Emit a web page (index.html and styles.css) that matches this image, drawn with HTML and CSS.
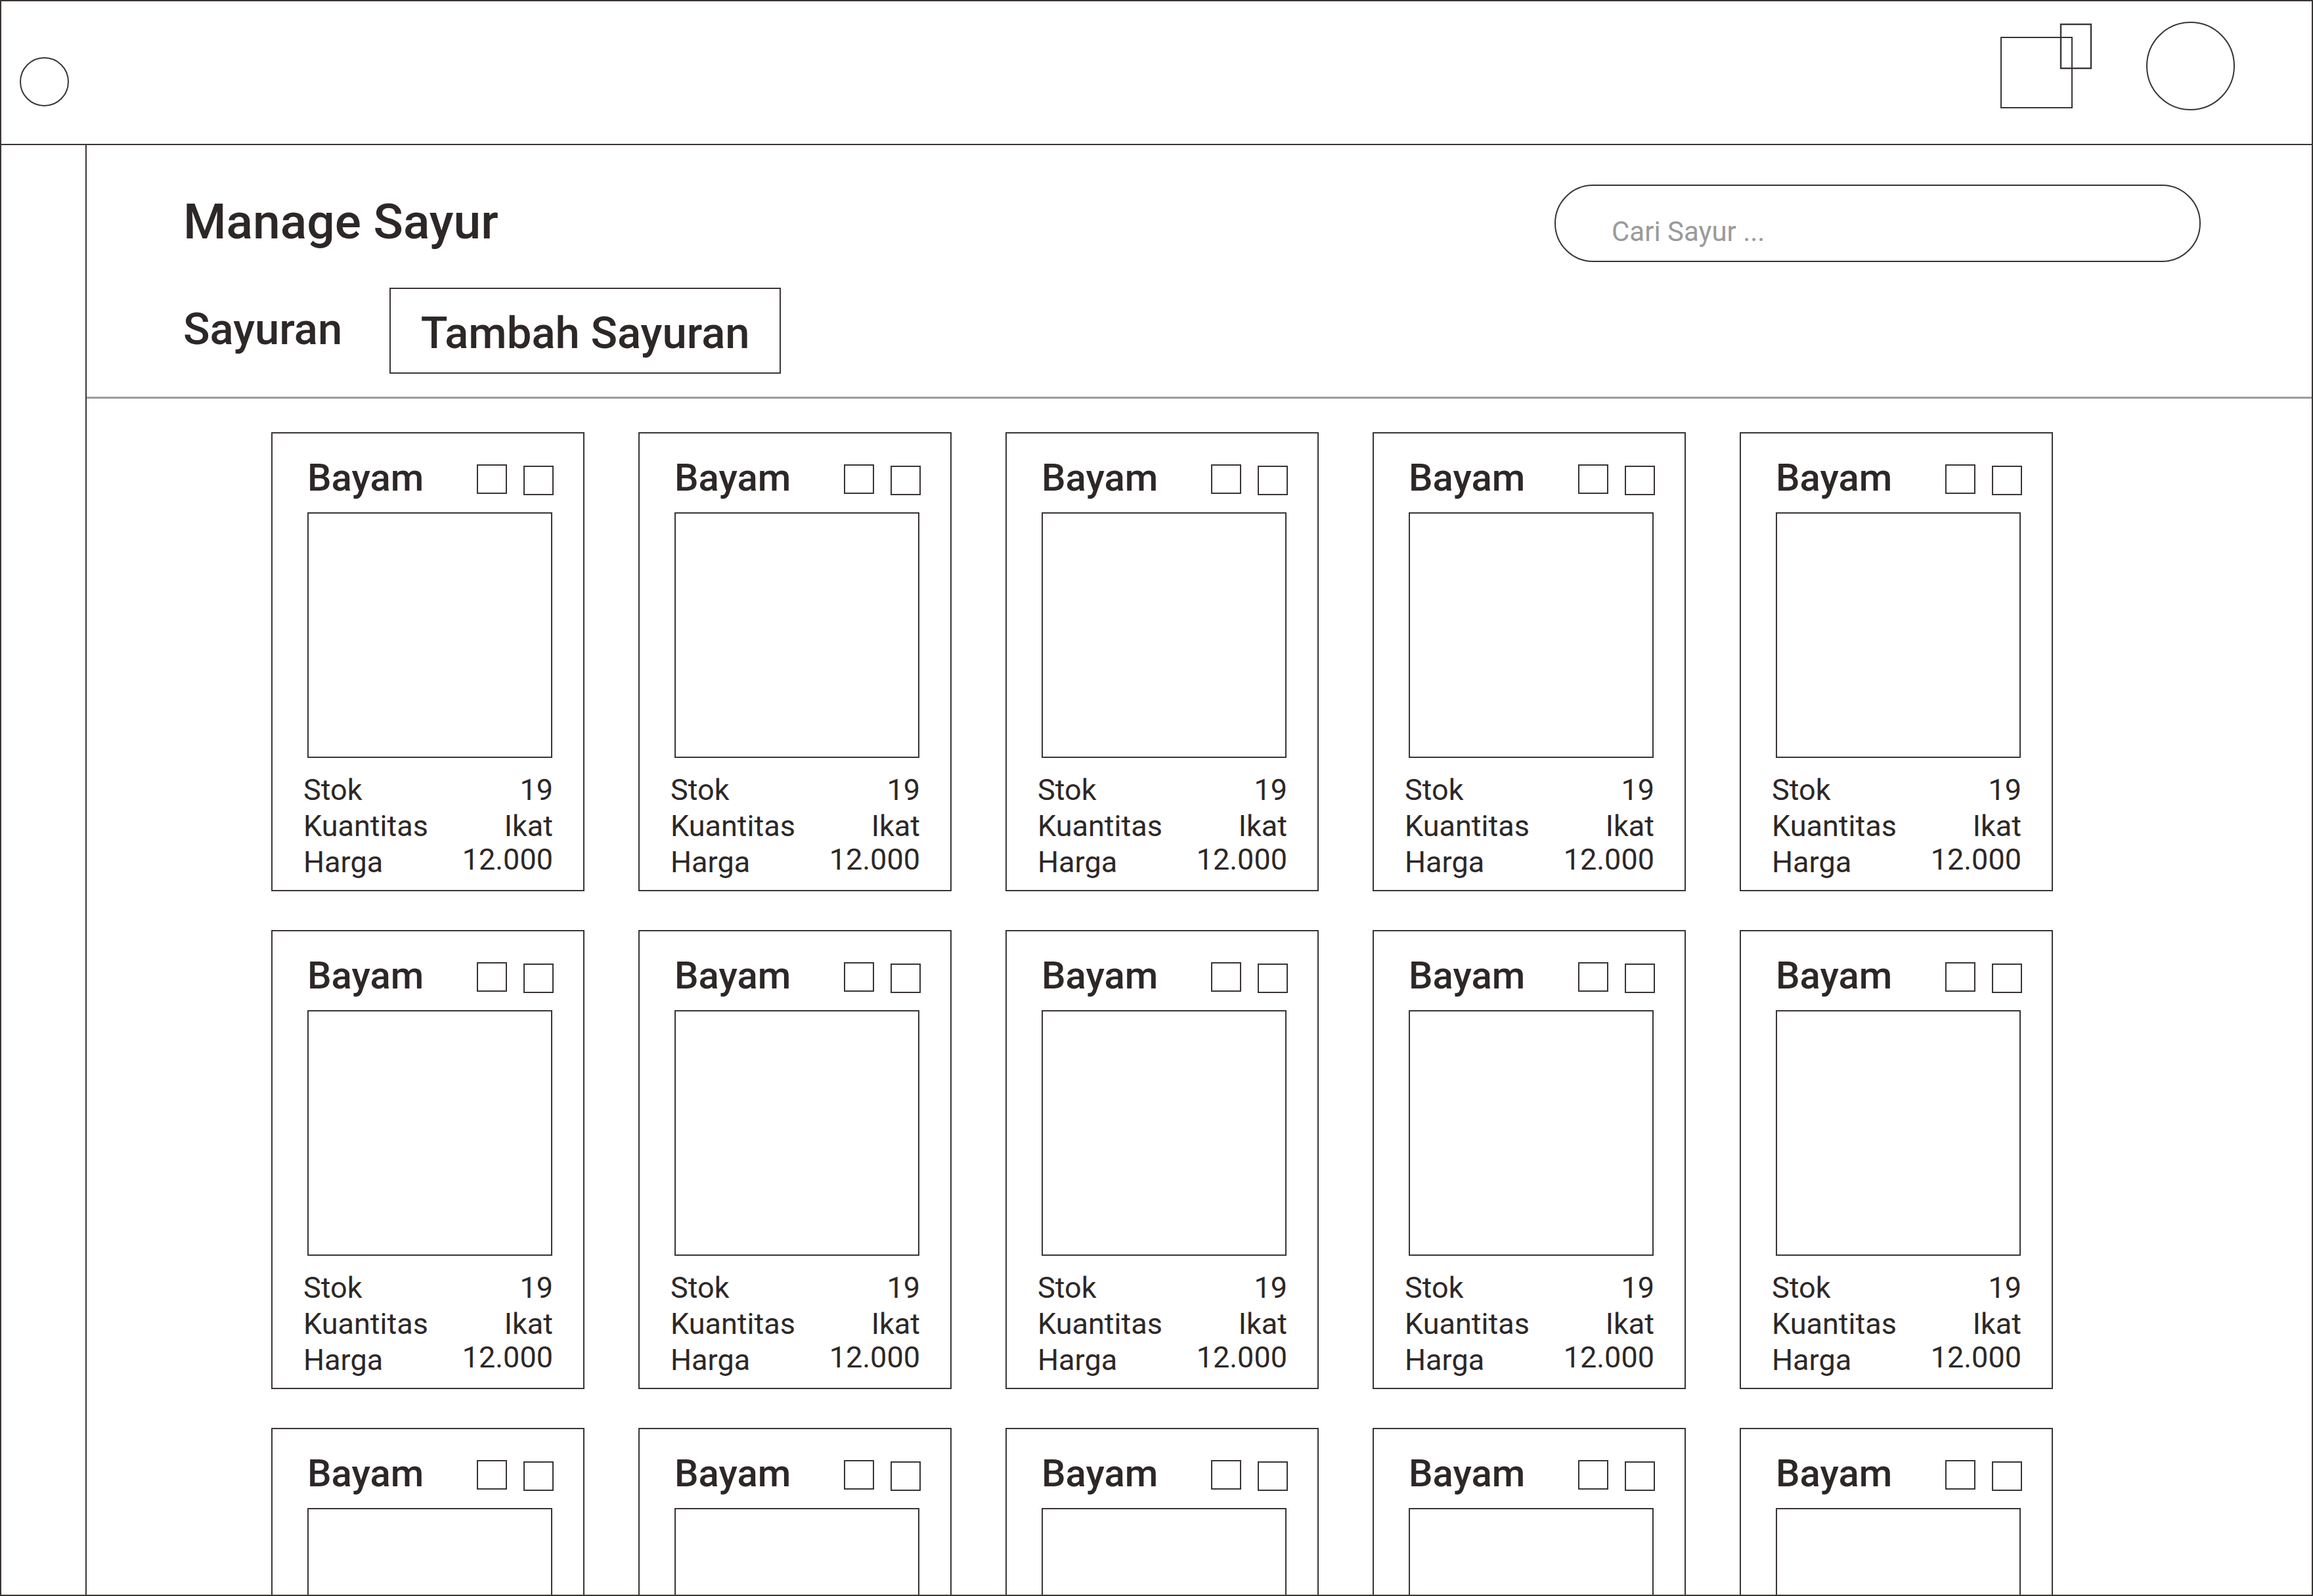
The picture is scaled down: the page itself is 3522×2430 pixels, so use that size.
FILE: index.html
```html
<!DOCTYPE html>
<html lang="id">
<head>
<meta charset="utf-8">
<title>Manage Sayur</title>
<link rel="stylesheet" href="styles.css">
</head>
<body>
<div class="frame">
  <header class="topbar">
    <div class="dot"></div>
    <div class="top-actions">
      <svg class="windows-icon" width="141" height="131" viewBox="0 0 141 131">
        <rect x="2" y="22" width="108" height="107" fill="none" stroke="#3a3534" stroke-width="2"/>
        <rect x="93" y="2" width="46" height="67" fill="none" stroke="#3a3534" stroke-width="2.4"/>
      </svg>
      <div class="avatar"></div>
    </div>
  </header>
  <div class="body">
    <aside class="sidebar"></aside>
    <main class="main">
      <section class="toolbar">
        <div class="toolbar-row">
          <h1 class="page-title">Manage Sayur</h1>
          <div class="search">Cari Sayur ...</div>
        </div>
        <div class="toolbar-row2">
          <span class="section-label">Sayuran</span>
          <button class="add-btn">Tambah Sayuran</button>
        </div>
      </section>
      <section class="grid">
        <article class="card"><div class="card-head"><span class="card-title">Bayam</span><div class="card-actions"><span class="sq"></span><span class="sq sq2"></span></div></div><div class="thumb"></div><div class="stats"><div class="stat"><span>Stok</span><span>19</span></div><div class="stat"><span>Kuantitas</span><span>Ikat</span></div><div class="stat"><span>Harga</span><span class="price">12.000</span></div></div></article>
        <article class="card"><div class="card-head"><span class="card-title">Bayam</span><div class="card-actions"><span class="sq"></span><span class="sq sq2"></span></div></div><div class="thumb"></div><div class="stats"><div class="stat"><span>Stok</span><span>19</span></div><div class="stat"><span>Kuantitas</span><span>Ikat</span></div><div class="stat"><span>Harga</span><span class="price">12.000</span></div></div></article>
        <article class="card"><div class="card-head"><span class="card-title">Bayam</span><div class="card-actions"><span class="sq"></span><span class="sq sq2"></span></div></div><div class="thumb"></div><div class="stats"><div class="stat"><span>Stok</span><span>19</span></div><div class="stat"><span>Kuantitas</span><span>Ikat</span></div><div class="stat"><span>Harga</span><span class="price">12.000</span></div></div></article>
        <article class="card"><div class="card-head"><span class="card-title">Bayam</span><div class="card-actions"><span class="sq"></span><span class="sq sq2"></span></div></div><div class="thumb"></div><div class="stats"><div class="stat"><span>Stok</span><span>19</span></div><div class="stat"><span>Kuantitas</span><span>Ikat</span></div><div class="stat"><span>Harga</span><span class="price">12.000</span></div></div></article>
        <article class="card"><div class="card-head"><span class="card-title">Bayam</span><div class="card-actions"><span class="sq"></span><span class="sq sq2"></span></div></div><div class="thumb"></div><div class="stats"><div class="stat"><span>Stok</span><span>19</span></div><div class="stat"><span>Kuantitas</span><span>Ikat</span></div><div class="stat"><span>Harga</span><span class="price">12.000</span></div></div></article>

        <article class="card"><div class="card-head"><span class="card-title">Bayam</span><div class="card-actions"><span class="sq"></span><span class="sq sq2"></span></div></div><div class="thumb"></div><div class="stats"><div class="stat"><span>Stok</span><span>19</span></div><div class="stat"><span>Kuantitas</span><span>Ikat</span></div><div class="stat"><span>Harga</span><span class="price">12.000</span></div></div></article>
        <article class="card"><div class="card-head"><span class="card-title">Bayam</span><div class="card-actions"><span class="sq"></span><span class="sq sq2"></span></div></div><div class="thumb"></div><div class="stats"><div class="stat"><span>Stok</span><span>19</span></div><div class="stat"><span>Kuantitas</span><span>Ikat</span></div><div class="stat"><span>Harga</span><span class="price">12.000</span></div></div></article>
        <article class="card"><div class="card-head"><span class="card-title">Bayam</span><div class="card-actions"><span class="sq"></span><span class="sq sq2"></span></div></div><div class="thumb"></div><div class="stats"><div class="stat"><span>Stok</span><span>19</span></div><div class="stat"><span>Kuantitas</span><span>Ikat</span></div><div class="stat"><span>Harga</span><span class="price">12.000</span></div></div></article>
        <article class="card"><div class="card-head"><span class="card-title">Bayam</span><div class="card-actions"><span class="sq"></span><span class="sq sq2"></span></div></div><div class="thumb"></div><div class="stats"><div class="stat"><span>Stok</span><span>19</span></div><div class="stat"><span>Kuantitas</span><span>Ikat</span></div><div class="stat"><span>Harga</span><span class="price">12.000</span></div></div></article>
        <article class="card"><div class="card-head"><span class="card-title">Bayam</span><div class="card-actions"><span class="sq"></span><span class="sq sq2"></span></div></div><div class="thumb"></div><div class="stats"><div class="stat"><span>Stok</span><span>19</span></div><div class="stat"><span>Kuantitas</span><span>Ikat</span></div><div class="stat"><span>Harga</span><span class="price">12.000</span></div></div></article>

        <article class="card"><div class="card-head"><span class="card-title">Bayam</span><div class="card-actions"><span class="sq"></span><span class="sq sq2"></span></div></div><div class="thumb"></div><div class="stats"><div class="stat"><span>Stok</span><span>19</span></div><div class="stat"><span>Kuantitas</span><span>Ikat</span></div><div class="stat"><span>Harga</span><span class="price">12.000</span></div></div></article>
        <article class="card"><div class="card-head"><span class="card-title">Bayam</span><div class="card-actions"><span class="sq"></span><span class="sq sq2"></span></div></div><div class="thumb"></div><div class="stats"><div class="stat"><span>Stok</span><span>19</span></div><div class="stat"><span>Kuantitas</span><span>Ikat</span></div><div class="stat"><span>Harga</span><span class="price">12.000</span></div></div></article>
        <article class="card"><div class="card-head"><span class="card-title">Bayam</span><div class="card-actions"><span class="sq"></span><span class="sq sq2"></span></div></div><div class="thumb"></div><div class="stats"><div class="stat"><span>Stok</span><span>19</span></div><div class="stat"><span>Kuantitas</span><span>Ikat</span></div><div class="stat"><span>Harga</span><span class="price">12.000</span></div></div></article>
        <article class="card"><div class="card-head"><span class="card-title">Bayam</span><div class="card-actions"><span class="sq"></span><span class="sq sq2"></span></div></div><div class="thumb"></div><div class="stats"><div class="stat"><span>Stok</span><span>19</span></div><div class="stat"><span>Kuantitas</span><span>Ikat</span></div><div class="stat"><span>Harga</span><span class="price">12.000</span></div></div></article>
        <article class="card"><div class="card-head"><span class="card-title">Bayam</span><div class="card-actions"><span class="sq"></span><span class="sq sq2"></span></div></div><div class="thumb"></div><div class="stats"><div class="stat"><span>Stok</span><span>19</span></div><div class="stat"><span>Kuantitas</span><span>Ikat</span></div><div class="stat"><span>Harga</span><span class="price">12.000</span></div></div></article>
      </section>
    </main>
  </div>
</div>
</body>
</html>
```

FILE: styles.css
```css
* { box-sizing: border-box; }

html, body {
  margin: 0;
  padding: 0;
  background: #ffffff;
}

body {
  font-family: Roboto, "Liberation Sans", Arial, sans-serif;
  color: #2d2827;
}

.frame {
  width: 3522px;
  height: 2430px;
  border: 2px solid #3a3534;
  display: flex;
  flex-direction: column;
  overflow: hidden;
  background: #ffffff;
}

/* top bar */
.topbar {
  height: 219px;
  flex: 0 0 219px;
  border-bottom: 2px solid #3a3534;
  display: flex;
  justify-content: space-between;
  align-items: flex-start;
  padding: 0 117px 0 28px;
}

.dot {
  width: 75px;
  height: 75px;
  margin-top: 85px;
  border: 2px solid #3a3534;
  border-radius: 50%;
}

.top-actions {
  display: flex;
  align-items: flex-start;
  margin-top: 31px;
}

.windows-icon {
  display: block;
  margin-top: 2px;
}

.avatar {
  width: 135px;
  height: 135px;
  margin-left: 82px;
  border: 2px solid #3a3534;
  border-radius: 50%;
}

/* body */
.body {
  flex: 1;
  display: flex;
  min-height: 0;
}

.sidebar {
  width: 130px;
  flex: 0 0 130px;
  border-right: 2px solid #3a3534;
}

.main {
  flex: 1;
  min-width: 0;
  overflow: hidden;
}

/* toolbar */
.toolbar {
  padding: 60px 169px 35px 147px;
  border-bottom: 3px solid #9c9c9c;
}

.toolbar-row {
  display: flex;
  justify-content: space-between;
  align-items: flex-start;
}

.page-title {
  margin: 19px 0 0 0;
  font-size: 75px;
  font-weight: 500;
  line-height: 1;
  color: #2d2827;
}

.search {
  width: 984px;
  height: 118px;
  border: 2px solid #3a3534;
  border-radius: 59px;
  display: flex;
  align-items: center;
  padding: 26px 0 0 85px;
  font-size: 42px;
  line-height: 1;
  color: #9a9a9a;
}

.toolbar-row2 {
  display: flex;
  align-items: center;
  margin-top: 39px;
}

.section-label {
  font-size: 67px;
  font-weight: 500;
  line-height: 1;
  margin-bottom: 4px;
  color: #2d2827;
}

.add-btn {
  margin-left: 72px;
  width: 596px;
  height: 131px;
  border: 2px solid #3a3534;
  background: #ffffff;
  padding: 8px 0 0 0;
  font-family: Roboto, "Liberation Sans", Arial, sans-serif;
  font-size: 67px;
  font-weight: 500;
  line-height: 1;
  color: #2d2827;
  border-radius: 0;
}

/* grid */
.grid {
  display: grid;
  grid-template-columns: repeat(5, 477px);
  grid-auto-rows: 699px;
  column-gap: 82px;
  row-gap: 59px;
  padding: 51px 0 0 281px;
}

.card {
  border: 2px solid #3a3534;
  padding: 38px 45px 0 53px;
  display: flex;
  flex-direction: column;
}

.card-head {
  display: flex;
  align-items: flex-start;
}

.card-title {
  font-size: 58px;
  font-weight: 500;
  line-height: 1;
  color: #2d2827;
}

.card-actions {
  margin-left: auto;
  margin-top: 9px;
  display: flex;
  align-items: flex-start;
  gap: 25px;
}

.sq {
  display: block;
  width: 46px;
  height: 45px;
  border: 2px solid #3a3534;
}

.sq2 {
  margin-top: 2px;
}

.thumb {
  width: 373px;
  height: 374px;
  margin-top: 24px;
  border: 2px solid #3a3534;
}

.stats {
  width: 380px;
  margin: 21px 0 0 -6px;
  font-size: 45px;
  line-height: 55px;
  font-weight: 400;
  color: #2d2827;
}

.stat {
  display: flex;
  justify-content: space-between;
}

.price {
  position: relative;
  top: -4px;
}
```
